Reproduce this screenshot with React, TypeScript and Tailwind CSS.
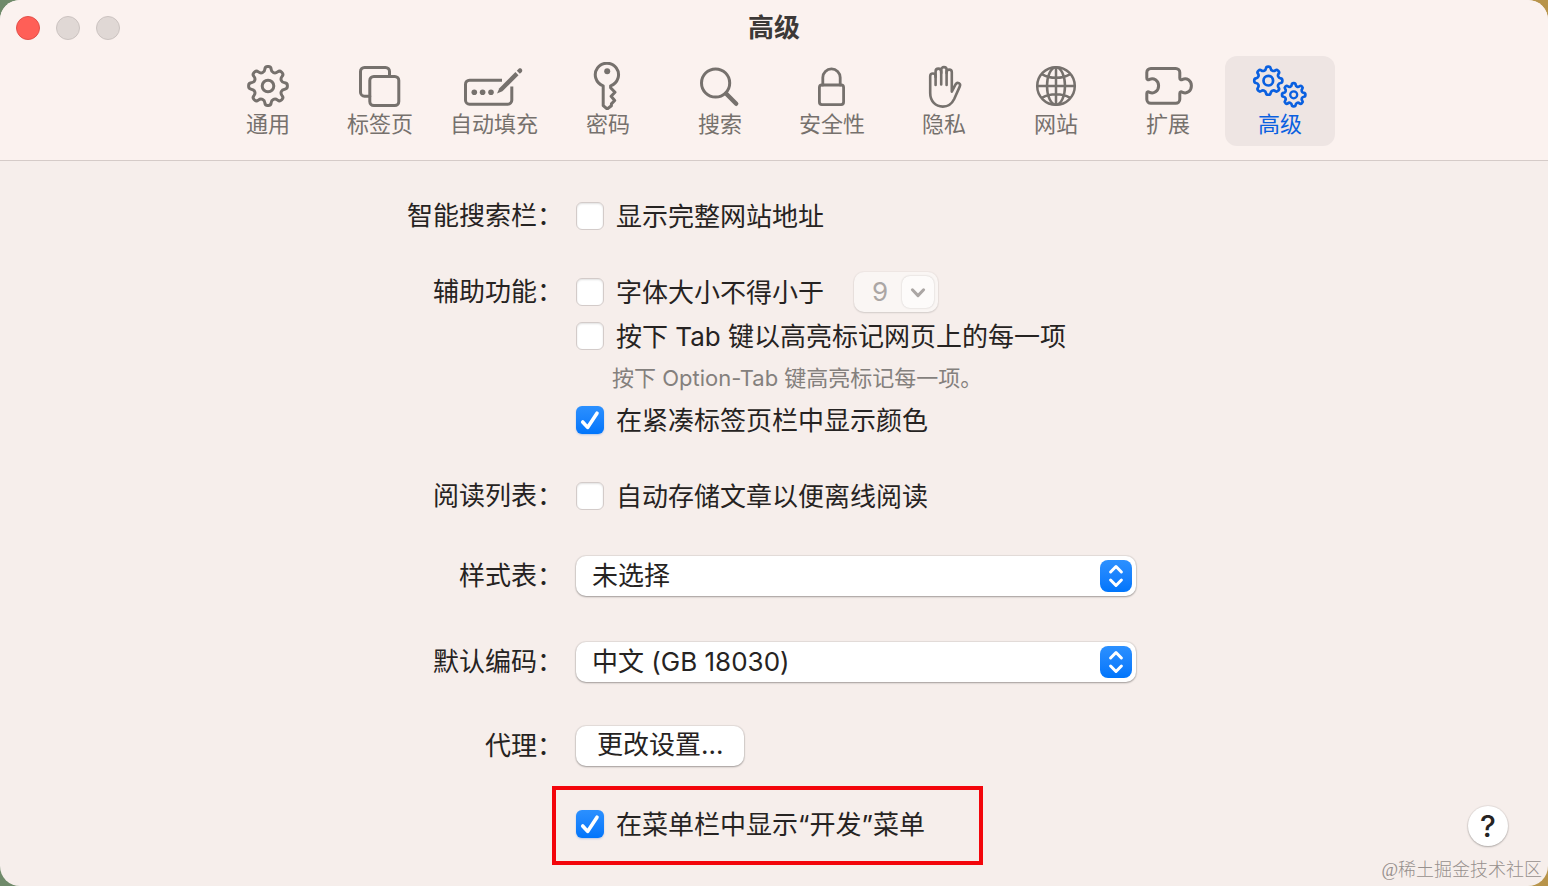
import { useState, type ReactNode } from 'react'

type Point = [number, number]

// Closed polygon path whose corners are rounded off by r
function roundedPath(points: Point[], r: number) {
  const toward = (a: Point, b: Point): Point => {
    const len = Math.hypot(b[0] - a[0], b[1] - a[1])
    const t = Math.min(r / len, 0.5)
    return [a[0] + (b[0] - a[0]) * t, a[1] + (b[1] - a[1]) * t]
  }
  const parts = points.map((p, i) => {
    const prev = points[(i + points.length - 1) % points.length]
    const next = points[(i + 1) % points.length]
    const a = toward(p, prev)
    const b = toward(p, next)
    return `${i === 0 ? 'M' : 'L'}${a[0].toFixed(2)} ${a[1].toFixed(2)}Q${p[0].toFixed(2)} ${p[1].toFixed(2)} ${b[0].toFixed(2)} ${b[1].toFixed(2)}`
  })
  return parts.join('') + 'Z'
}

function gearPath(cx: number, cy: number, outer: number, inner: number, teeth = 8) {
  const step = (Math.PI * 2) / teeth
  const points: Point[] = []
  for (let i = 0; i < teeth; i++) {
    const a = i * step - Math.PI / 2
    const corners: [number, number][] = [
      [inner, -0.3],
      [outer, -0.19],
      [outer, 0.19],
      [inner, 0.3]
    ]
    for (const [radius, offset] of corners) {
      points.push([cx + radius * Math.cos(a + offset * step), cy + radius * Math.sin(a + offset * step)])
    }
  }
  return roundedPath(points, outer * 0.13)
}

function Icon({ children, width = 3 }: { children: ReactNode; width?: number }) {
  return (
    <svg
      width="64"
      height="48"
      viewBox="0 0 64 48"
      fill="none"
      stroke="currentColor"
      strokeWidth={width}
      strokeLinecap="round"
      strokeLinejoin="round"
      aria-hidden="true"
    >
      {children}
    </svg>
  )
}

const tabs = [
  {
    name: '通用',
    icon: (
      <Icon>
        <path d={gearPath(32, 24, 19.6, 14.6)} />
        <circle cx="32" cy="24" r="5.8" />
      </Icon>
    )
  },
  {
    name: '标签页',
    icon: (
      <Icon>
        <path d="M21.8 34.2H16.5a4 4 0 0 1-4-4V9.5a4 4 0 0 1 4-4h21a4 4 0 0 1 4 4v5" />
        <rect x="21.8" y="14.5" width="29" height="29" rx="4" />
      </Icon>
    )
  },
  {
    name: '自动填充',
    icon: (
      <Icon>
        <path d="M40 18.2H7.5a4 4 0 0 0-4 4v16a4 4 0 0 0 4 4h38.3a4 4 0 0 0 4-4V24.5" strokeLinecap="butt" />
        <g fill="currentColor" stroke="none">
          <circle cx="12.3" cy="30.3" r="2.8" />
          <circle cx="20.6" cy="30.3" r="2.8" />
          <circle cx="29" cy="30.3" r="2.8" />
          <path d="M35 31.6l2.3-5.4L53.4 10.1l3.1 3.1L40.4 29.3z" />
          <path d="M54.8 8.7l1.9-1.9c2-1.6 4.6.9 3.1 3.1l-1.9 1.9z" />
        </g>
      </Icon>
    )
  },
  {
    name: '密码',
    icon: (
      <Icon>
        <path d="M27.2 23.8a11.6 11.6 0 1 1 7.4 0v2l4.4 4.5-3.9 4 3.6 4.2-3.3 3.4v1.8L31.2 47l-4-3.4z" />
        <circle cx="31.2" cy="9.2" r="3" fill="currentColor" stroke="none" />
      </Icon>
    )
  },
  {
    name: '搜索',
    icon: (
      <Icon>
        <circle cx="27.6" cy="21" r="14.1" />
        <path d="M38 31.5l10.2 10.3" strokeWidth="4.4" />
      </Icon>
    )
  },
  {
    name: '安全性',
    icon: (
      <Icon width={2.8}>
        <rect x="19.4" y="23" width="24.2" height="19.6" rx="2.5" />
        <path d="M22.8 23v-7.4a8.7 8.7 0 0 1 17.4 0V23" />
      </Icon>
    )
  },
  {
    name: '隐私',
    icon: (
      <Icon width={2.6}>
        <path d="M23.6 23V14.2a2.7 2.7 0 0 0-5.4 0V31c0 8.2 5.4 13.6 12.6 13.6 5.8 0 9-2.6 11.4-7.6l5.6-12.6c1.3-3-2.5-4.8-4.1-2.2L39.8 29.6V10.2a2.6 2.6 0 0 0-5.2 0V23" />
        <path d="M34.6 11V7.8a2.7 2.7 0 0 0-5.4 0V22.5" />
        <path d="M29.2 11V9.4a2.8 2.8 0 0 0-5.6 0V15" />
      </Icon>
    )
  },
  {
    name: '网站',
    icon: (
      <Icon width={2.5}>
        <circle cx="32" cy="24" r="18.8" />
        <ellipse cx="32" cy="24" rx="9" ry="18.8" />
        <path d="M32 5.2v37.6M13.2 24h37.6M18.3 12.4c7.6 4.6 19.8 4.6 27.4 0M18.3 35.6c7.6-4.6 19.8-4.6 27.4 0" />
      </Icon>
    )
  },
  {
    name: '扩展',
    icon: (
      <Icon>
        <path d="M10.8 16V10.4a4 4 0 0 1 4-4h25a4 4 0 0 1 4 4V16c0 1.9 1.2 2.1 2.8 1.3 3.9-1.9 8.8 1 8.8 6.5s-4.9 8.4-8.8 6.5c-1.6-.8-2.8-.6-2.8 1.3v5.7a4 4 0 0 1-4 4h-25a4 4 0 0 1-4-4v-5.7c0-1.9 1.2-2.1 2.8-1.3 3.9 1.9 9-1 9-6.5s-5.1-8.4-9-6.5c-1.6.8-2.8.6-2.8-1.3z" />
      </Icon>
    )
  },
  {
    name: '高级',
    icon: (
      <Icon width={2.7}>
        <path d={gearPath(20.3, 18.7, 14.2, 10.9)} />
        <circle cx="20.3" cy="18.7" r="4.8" />
        <path d={gearPath(45.7, 32.8, 11.8, 8.9)} />
        <circle cx="45.7" cy="32.8" r="3.5" strokeWidth="2.3" />
      </Icon>
    )
  }
]

function Checkbox({ label, defaultChecked = false }: { label: string; defaultChecked?: boolean }) {
  return (
    <label className="flex h-10 items-center gap-3 whitespace-nowrap">
      <span className="grid size-7 shrink-0">
        <input
          type="checkbox"
          defaultChecked={defaultChecked}
          className="peer col-start-1 row-start-1 size-7 appearance-none rounded-md border border-[#d3cbc9] bg-white shadow-[inset_0_1px_2px_rgba(0,0,0,0.12)] checked:border-transparent checked:bg-linear-to-b checked:from-[#2b90ff] checked:to-[#0075fb] checked:bg-origin-border checked:shadow-[0_1px_2px_rgba(0,90,220,0.25)]"
        />
        <svg
          viewBox="0 0 28 28"
          className="pointer-events-none invisible col-start-1 row-start-1 size-7 peer-checked:visible"
          fill="none"
          stroke="white"
          strokeWidth="3.6"
          strokeLinecap="round"
          strokeLinejoin="round"
          aria-hidden="true"
        >
          <path d="M6.7 16l4.9 5.4L21 7.2" />
        </svg>
      </span>
      <span className="pt-0.5">{label}</span>
    </label>
  )
}

function PopUp({ id, options }: { id: string; options: string[] }) {
  return (
    <div className="grid w-[560px]">
      <select
        id={id}
        className="col-start-1 row-start-1 h-10 w-full appearance-none rounded-[10px] bg-white pr-12 pb-1 pl-4 shadow-[0_0_1px_1px_rgba(0,0,0,0.07),0_1px_2px_rgba(0,0,0,0.3)]"
      >
        {options.map(option => (
          <option key={option}>{option}</option>
        ))}
      </select>
      <span className="pointer-events-none col-start-1 row-start-1 mr-1 size-8 self-center justify-self-end rounded-lg bg-linear-to-b from-[#2b90ff] to-[#0075fb]">
        <svg
          viewBox="0 0 32 32"
          fill="none"
          stroke="white"
          strokeWidth="3"
          strokeLinecap="round"
          strokeLinejoin="round"
          aria-hidden="true"
        >
          <path d="M10.6 12L16 6.5l5.4 5.5M10.6 20l5.4 5.5 5.4-5.5" />
        </svg>
      </span>
    </div>
  )
}

function Row({ label, htmlFor, children }: { label?: string; htmlFor?: string; children: ReactNode }) {
  return (
    <div className="flex items-start gap-[13px]">
      <div className="flex h-10 w-39 shrink-0 items-center justify-end whitespace-nowrap">
        {htmlFor ? <label htmlFor={htmlFor}>{label}</label> : <span>{label}</span>}
      </div>
      <div className="w-[565px]">{children}</div>
    </div>
  )
}

export default function App() {
  const [active, setActive] = useState('高级')

  return (
    <div className="min-h-screen bg-linear-to-r from-[#6f8a6a] to-[#b8944a] font-['Inter','Noto_Sans_CJK_SC',sans-serif]">
      <div className="flex min-h-screen flex-col overflow-hidden rounded-[20px] bg-[#f6eeeb] text-[26px] leading-10 text-[#262322]">
        <header className="border-b border-[#d5cbc8] bg-[#fbf2ef] pb-[14px]">
          <div className="grid h-14 grid-cols-[1fr_auto_1fr] items-center">
            <div className="flex gap-4 pl-4">
              <button aria-label="关闭" className="size-6 rounded-full border border-[#e2504a] bg-[#ff5f57]" />
              <button aria-label="最小化" className="size-6 rounded-full border border-[#cbc3c0] bg-[#e0d8d5]" />
              <button aria-label="缩放" className="size-6 rounded-full border border-[#cbc3c0] bg-[#e0d8d5]" />
            </div>
            <h1 className="font-bold text-[#3d3937]">高级</h1>
          </div>

          <nav className="flex justify-center gap-0.5">
            {tabs.map(tab => (
              <button
                key={tab.name}
                onClick={() => setActive(tab.name)}
                className={`flex h-[90px] min-w-[110px] flex-col items-center rounded-xl px-[13px] pt-1.5 text-[22px] leading-7 ${
                  active === tab.name ? 'bg-[#eee5e3] text-[#0a60e0]' : 'text-[#76716d]'
                }`}
              >
                {tab.icon}
                <span className="whitespace-nowrap">{tab.name}</span>
              </button>
            ))}
          </nav>
        </header>

        <main className="flex flex-1">
          <div className="flex-1" />

          <form className="pt-[35px]" onSubmit={e => e.preventDefault()}>
            <Row label="智能搜索栏：">
              <Checkbox label="显示完整网站地址" />
            </Row>

            <div className="mt-9">
              <Row label="辅助功能：">
                <div className="flex items-center gap-[30px]">
                  <Checkbox label="字体大小不得小于" />
                  <div className="grid w-[84px]">
                    <select
                      disabled
                      aria-label="字体大小"
                      className="col-start-1 row-start-1 h-10 w-full appearance-none rounded-[10px] bg-[#faf6f4] pl-[18px] text-[#aba6a4] opacity-100 shadow-[0_0_1px_1px_rgba(0,0,0,0.03),0_1px_2px_rgba(0,0,0,0.12)]"
                    >
                      <option>9</option>
                    </select>
                    <span className="pointer-events-none col-start-1 row-start-1 mr-1 size-8 self-center justify-self-end rounded-lg bg-[#fdfbfa] shadow-[0_0_2px_rgba(0,0,0,0.2)]">
                      <svg
                        viewBox="0 0 32 32"
                        fill="none"
                        stroke="#aba6a4"
                        strokeWidth="3"
                        strokeLinecap="round"
                        strokeLinejoin="round"
                        aria-hidden="true"
                      >
                        <path d="M10.4 13.8l5.6 5.8 5.6-5.8" />
                      </svg>
                    </span>
                  </div>
                </div>
                <div className="mt-1">
                  <Checkbox label="按下 Tab 键以高亮标记网页上的每一项" />
                </div>
                <p className="pl-9 text-[22px] leading-11 text-[#84807d]">按下 Option-Tab 键高亮标记每一项。</p>
                <Checkbox label="在紧凑标签页栏中显示颜色" defaultChecked />
              </Row>
            </div>

            <div className="mt-9">
              <Row label="阅读列表：">
                <Checkbox label="自动存储文章以便离线阅读" />
              </Row>
            </div>

            <div className="mt-10">
              <Row label="样式表：" htmlFor="stylesheet">
                <PopUp id="stylesheet" options={['未选择']} />
              </Row>
            </div>

            <div className="mt-[46px]">
              <Row label="默认编码：" htmlFor="encoding">
                <PopUp id="encoding" options={['中文 (GB 18030)']} />
              </Row>
            </div>

            <div className="mt-11">
              <Row label="代理：">
                <button
                  type="button"
                  className="flex h-10 items-center rounded-[10px] bg-white px-[21px] pb-0.5 shadow-[0_0_1px_1px_rgba(0,0,0,0.07),0_1px_2px_rgba(0,0,0,0.3)]"
                >
                  更改设置...
                </button>
              </Row>
            </div>

            <div className="mt-5">
              <Row>
                <div className="-ml-6 w-[431px] border-4 border-[#f3050b] px-5 pt-[14px] pb-[17px]">
                  <Checkbox label="在菜单栏中显示“开发”菜单" defaultChecked />
                </div>
              </Row>
            </div>
          </form>

          <div className="flex flex-1 flex-col items-end justify-end gap-3 pb-1">
            <button
              aria-label="帮助"
              className="mr-10 size-10 rounded-full bg-white text-[30px] font-medium shadow-[0_0_1px_1px_rgba(0,0,0,0.06),0_1px_2px_rgba(0,0,0,0.25)]"
            >
              ?
            </button>
            <p className="mr-1.5 font-['Liberation_Serif','Noto_Sans_CJK_SC',serif] text-[18px] leading-6 font-light whitespace-nowrap text-[#96908d]">
              @稀土掘金技术社区
            </p>
          </div>
        </main>
      </div>
    </div>
  )
}
